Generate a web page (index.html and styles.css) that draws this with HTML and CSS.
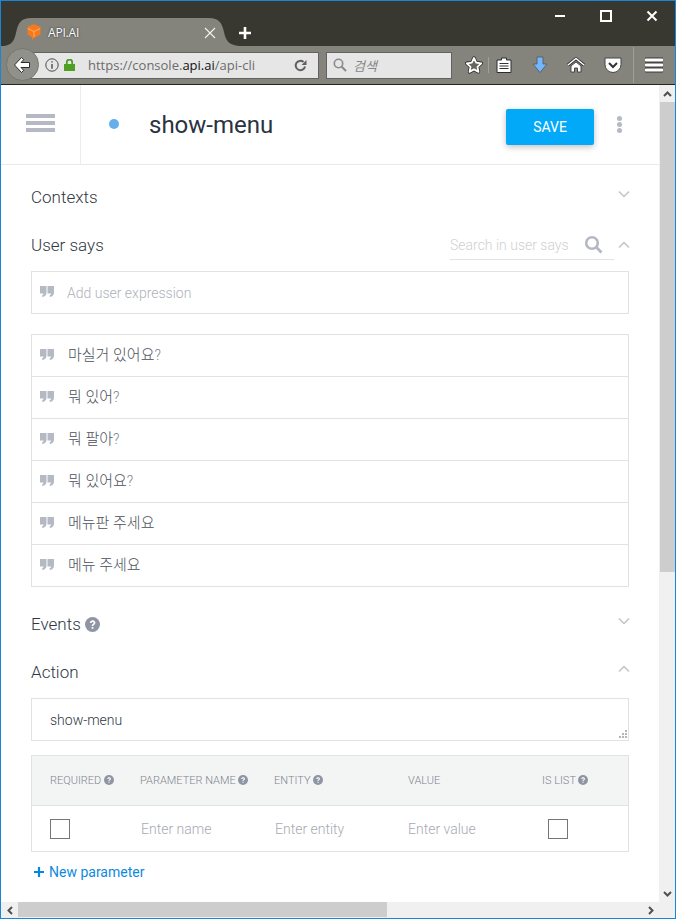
FILE: index.html
```html
<!DOCTYPE html>
<html lang="en">
<head>
<meta charset="utf-8">
<title>API.AI</title>
<link rel="stylesheet" href="styles.css">
</head>
<body>
<svg class="defs" width="0" height="0">
  <defs>
    <symbol id="quote" viewBox="0 0 14 11"><path d="M0 0h6.500v6.500c0 2.400-1.500 3.900-4 4.500L2 9.500C3 9 3.500 8.400 3.500 7.500H0zM7.500 0H14v6.500c0 2.400-1.500 3.900-4 4.500l-.5-1.500c1-.5 1.500-1.100 1.500-2H7.500z"/></symbol>
    <symbol id="help" viewBox="0 0 16 16"><circle cx="8" cy="8" r="8"/><path d="M5.200 6.300C5.300 4.600 6.500 3.500 8.200 3.500c1.700 0 2.900 1 2.900 2.500 0 1.200-.7 1.800-1.500 2.400-.6.400-.8.700-.8 1.300H7.100c0-1.100.4-1.700 1.200-2.300.6-.4.900-.8.900-1.300s-.4-.9-1-.9c-.7 0-1.100.5-1.200 1.100zM7.100 10.600h1.900v1.900H7.100z" fill="#fff"/></symbol>
  </defs>
</svg>
<div class="window">
  <div class="titlebar">
    <div class="tab">
      <svg class="tab-shape" width="240" height="28" viewBox="0 0 240 28"><path d="M3 28C10 27 13 24 15 15 17 5 20 0 30 0H208C218 0 221 5 223 14 225 24 229 27 238 28Z"/></svg>
      <svg class="tab-logo" width="14" height="16" viewBox="0 0 14 16"><path d="M7 0l6.500 3v7.500L7 14l-2 2v-2.400L.5 10.500V3z" fill="#f5791f"/><path d="M.8 4.500L7 7.500l6.200-3M7 7.500V13" stroke="#ffb066" stroke-width="1" fill="none"/></svg>
      <span class="tab-title">API.AI</span>
      <svg class="tab-close" width="12" height="12" viewBox="0 0 12 12"><path d="M1 1l10 10M11 1L1 11" stroke="#f2f2f2" stroke-width="1.100"/></svg>
    </div>
    <svg class="new-tab" width="14" height="14" viewBox="0 0 14 14"><path d="M7 1v12M1 7h12" stroke="#fff" stroke-width="2.600"/></svg>
    <div class="win-controls">
      <svg width="12" height="12" viewBox="0 0 12 12"><path d="M1 6h10" stroke="#fff" stroke-width="2"/></svg>
      <svg width="12" height="12" viewBox="0 0 12 12"><rect x="1" y="1" width="10" height="10" fill="none" stroke="#fff" stroke-width="2"/></svg>
      <svg width="12" height="12" viewBox="0 0 12 12"><path d="M1.500 1.500l9 9M10.500 1.500l-9 9" stroke="#fff" stroke-width="2"/></svg>
    </div>
  </div>
  <div class="toolbar">
    <div class="back">
      <svg width="18" height="18" viewBox="0 0 18 18"><path d="M8.500 1.500L1.500 9l7 7.500 2.200-2.200L8 11.500h8.500v-5H8l2.700-2.800z" fill="#fff" stroke="#2c2c2c" stroke-width="1"/></svg>
    </div>
    <div class="urlbar">
      <svg class="info" width="14" height="14" viewBox="0 0 14 14"><circle cx="7" cy="7" r="6.200" fill="none" stroke="#4a4a4a" stroke-width="1"/><path d="M7 3.200v1.400M7 6v4.800" stroke="#4a4a4a" stroke-width="1.400"/></svg>
      <svg class="lock" width="11" height="12" viewBox="0 0 11 12"><path d="M0 5h11v7H0z" fill="#4f9f25"/><path d="M2.800 5V3.200a2.700 2.700 0 0 1 5.400 0V5" fill="none" stroke="#4f9f25" stroke-width="1.800"/></svg>
      <span class="url"><span class="url-dim">https://console.</span><span class="url-host">api.ai</span><span class="url-dim">/api-cli</span></span>
      <svg class="reload" width="13" height="13" viewBox="0 0 13 13"><path d="M11 7.500A4.700 4.700 0 1 1 9.500 3" fill="none" stroke="#5f5f5f" stroke-width="2"/><path d="M12.500 1v5h-5z" fill="#5f5f5f"/></svg>
    </div>
    <div class="searchbar">
      <svg width="14" height="14" viewBox="0 0 14 14"><circle cx="5.500" cy="5.500" r="4.200" fill="none" stroke="#8a8a8a" stroke-width="1.600"/><path d="M8.700 8.700l4.300 4.300" stroke="#8a8a8a" stroke-width="2"/></svg>
      <span class="search-label">검색</span>
    </div>
    <div class="tools">
      <svg class="tool-star" width="18" height="18" viewBox="0 0 18 18"><path d="M9 2l2.200 4.700 5.100.6-3.800 3.500 1 5.100L9 13.400l-4.500 2.500 1-5.100-3.800-3.500 5.100-.6z" fill="#66665f" stroke="#2c2c2c" stroke-width="3.400" stroke-linejoin="round"/><path d="M9 2l2.200 4.700 5.100.6-3.800 3.500 1 5.100L9 13.400l-4.500 2.500 1-5.100-3.800-3.500 5.100-.6z" fill="#66665f" stroke="#fff" stroke-width="1.800" stroke-linejoin="round"/></svg>
      <span class="tool-sep"></span>
      <svg class="tool-list" width="16" height="16" viewBox="0 0 16 16"><path d="M1 3h4.500V1h5v2H15v12.500H1z" fill="#fff" stroke="#2c2c2c" stroke-width="1" stroke-linejoin="round"/><path d="M3.500 6.500h9M3.500 9h9M3.500 11.500h9" stroke="#333" stroke-width="1.200"/></svg>
      <svg class="tool-down" width="16" height="18" viewBox="0 0 16 18"><path d="M5 1h6v7h4l-7 8.500L1 8h4z" fill="#72b7ff" stroke="#555" stroke-width=".8"/></svg>
      <svg class="tool-home" width="18" height="16" viewBox="0 0 18 16"><path d="M1 8l8-6.500L17 8" fill="none" stroke="#2c2c2c" stroke-width="3"/><path d="M1 8l8-6.500L17 8" fill="none" stroke="#fff" stroke-width="1.500"/><path d="M4 9l5-4 5 4v6h-3.500v-4h-3v4H4z" fill="#fff" stroke="#2c2c2c" stroke-width=".8"/></svg>
      <svg class="tool-pocket" width="18" height="16" viewBox="0 0 18 16"><path d="M1 1h16v6.500a8 8 0 0 1-16 0z" fill="#fff" stroke="#444" stroke-width="1" stroke-linejoin="round"/><path d="M5 6l4 4 4-4" fill="none" stroke="#333" stroke-width="2"/></svg>
      <span class="tool-sep tool-sep-wide"></span>
      <svg class="tool-menu" width="18" height="16" viewBox="0 0 18 16"><path d="M1 1h16a.6.6 0 0 1 0 4H1a.6.6 0 0 1 0-4zM1 6h16a.6.6 0 0 1 0 4H1a.6.6 0 0 1 0-4zM1 11h16a.6.6 0 0 1 0 4H1a.6.6 0 0 1 0-4z" fill="#fff" stroke="#2c2c2c" stroke-width=".9"/></svg>
    </div>
  </div>
  <div class="viewport">
    <div class="page">
      <header class="app-header">
        <div class="nav-cell">
          <div class="burger"><span></span><span></span><span></span></div>
        </div>
        <div class="header-main">
          <span class="status-dot"></span>
          <h1 class="intent-name">show-menu</h1>
          <button class="save-btn">SAVE</button>
          <div class="kebab"><span></span><span></span><span></span></div>
        </div>
      </header>
      <main class="content">
        <section class="section">
          <div class="section-head">
            <span class="section-title">Contexts</span>
            <svg class="chevron chevron-push" width="12" height="8" viewBox="0 0 12 8"><path d="M1 1.500l5 5 5-5" fill="none" stroke="#bfc3cc" stroke-width="1.500"/></svg>
          </div>
        </section>
        <section class="section">
          <div class="section-head">
            <span class="section-title">User says</span>
            <div class="search-field">
              <span class="search-ph">Search in user says</span>
              <svg width="19" height="19" viewBox="0 0 19 19"><circle cx="8" cy="8" r="5.800" fill="none" stroke="#b3b8c4" stroke-width="2.600"/><path d="M12.300 12.300l5.200 5.200" stroke="#b3b8c4" stroke-width="2.800"/></svg>
            </div>
            <svg class="chevron" width="12" height="8" viewBox="0 0 12 8"><path d="M1 6.500l5-5 5 5" fill="none" stroke="#bfc3cc" stroke-width="1.500"/></svg>
          </div>
          <div class="box add-row">
            <svg class="quote"><use href="#quote"/></svg>
            <span class="placeholder">Add user expression</span>
          </div>
          <div class="box phrase-list">
            <div class="phrase"><svg class="quote"><use href="#quote"/></svg><span class="phrase-text">마실거 있어요<span class="qm">?</span></span></div>
            <div class="phrase"><svg class="quote"><use href="#quote"/></svg><span class="phrase-text">뭐 있어<span class="qm">?</span></span></div>
            <div class="phrase"><svg class="quote"><use href="#quote"/></svg><span class="phrase-text">뭐 팔아<span class="qm">?</span></span></div>
            <div class="phrase"><svg class="quote"><use href="#quote"/></svg><span class="phrase-text">뭐 있어요<span class="qm">?</span></span></div>
            <div class="phrase"><svg class="quote"><use href="#quote"/></svg><span class="phrase-text">메뉴판 주세요</span></div>
            <div class="phrase"><svg class="quote"><use href="#quote"/></svg><span class="phrase-text">메뉴 주세요</span></div>
          </div>
        </section>
        <section class="section section-events">
          <div class="section-head">
            <span class="section-title">Events</span>
            <svg class="help-lg"><use href="#help"/></svg>
            <svg class="chevron chevron-push" width="12" height="8" viewBox="0 0 12 8"><path d="M1 1.500l5 5 5-5" fill="none" stroke="#bfc3cc" stroke-width="1.500"/></svg>
          </div>
        </section>
        <section class="section">
          <div class="section-head">
            <span class="section-title">Action</span>
            <svg class="chevron chevron-push" width="12" height="8" viewBox="0 0 12 8"><path d="M1 6.500l5-5 5 5" fill="none" stroke="#bfc3cc" stroke-width="1.500"/></svg>
          </div>
          <div class="box action-box">
            <span>show-menu</span>
            <svg class="grip" width="9" height="9" viewBox="0 0 9 9"><path d="M7 0h2v2H7zM4 3h2v2H4zM7 3h2v2H7zM1 6h2v2H1zM4 6h2v2H4zM7 6h2v2H7z" fill="#b5b5b5"/></svg>
          </div>
          <div class="box params">
            <div class="params-row params-head">
              <div class="th">Required <svg class="help-sm"><use href="#help"/></svg></div>
              <div class="th">Parameter name <svg class="help-sm"><use href="#help"/></svg></div>
              <div class="th">Entity <svg class="help-sm"><use href="#help"/></svg></div>
              <div class="th">Value</div>
              <div class="th">Is list <svg class="help-sm"><use href="#help"/></svg></div>
            </div>
            <div class="params-row params-body">
              <div><span class="checkbox"></span></div>
              <div class="td-ph">Enter name</div>
              <div class="td-ph">Enter entity</div>
              <div class="td-ph td-value">Enter value</div>
              <div><span class="checkbox checkbox-list"></span></div>
            </div>
          </div>
          <a class="new-param"><svg width="10" height="10" viewBox="0 0 10 10"><path d="M5 0v10M0 5h10" stroke="#0288e0" stroke-width="2.200"/></svg>New parameter</a>
        </section>
      </main>
    </div>
    <div class="vscroll">
      <span class="sb-btn"><svg width="9" height="6" viewBox="0 0 9 6"><path d="M1 5l3.500-3.500L8 5" fill="none" stroke="#505050" stroke-width="2"/></svg></span>
      <div class="v-track"><div class="v-thumb"></div></div>
      <span class="sb-btn"><svg width="9" height="6" viewBox="0 0 9 6"><path d="M1 1l3.500 3.500L8 1" fill="none" stroke="#505050" stroke-width="2"/></svg></span>
    </div>
  </div>
  <div class="hscroll">
    <span class="sb-btn sb-btn-h"><svg width="6" height="9" viewBox="0 0 6 9"><path d="M5 1L1.500 4.500 5 8" fill="none" stroke="#505050" stroke-width="2"/></svg></span>
    <div class="h-track"><div class="h-thumb"></div></div>
    <span class="sb-btn sb-btn-h"><svg width="6" height="9" viewBox="0 0 6 9"><path d="M1 1l3.500 3.500L1 8" fill="none" stroke="#505050" stroke-width="2"/></svg></span>
    <span class="sb-corner"></span>
  </div>
</div>
</body>
</html>
```
FILE: styles.css
```css
* { box-sizing: border-box; }
html, body { margin: 0; padding: 0; }
body { width: 676px; height: 919px; overflow: hidden; font-family: Roboto, "Noto Sans CJK KR", sans-serif; }
.defs { position: absolute; }

.window { width: 676px; height: 919px; display: flex; flex-direction: column; border: 1px solid #1a86d8; background: #fff; }

/* title bar */
.titlebar { height: 45px; flex: none; background: #383831; display: flex; align-items: flex-start; }
.tab { position: relative; width: 240px; height: 28px; margin-top: 17px; flex: none; display: flex; align-items: center; padding-left: 26px; }
.tab-shape { position: absolute; left: 0; top: 0; fill: #84847c; }
.tab-logo { position: relative; margin-right: 7px; }
.tab-title { position: relative; font: 12px "Open Sans", sans-serif; color: #fff; text-shadow: 0 0 2px #222; letter-spacing: -.2px; }
.tab-close { position: absolute; left: 203px; top: 9px; }
.new-tab { margin: 25px 0 0 -3px; flex: none; }
.win-controls { margin-left: auto; margin-top: 9px; display: flex; gap: 34px; padding-right: 17px; }

/* toolbar */
.toolbar { height: 39px; flex: none; background: #84847c; border-bottom: 1px solid #25251f; display: flex; align-items: center; position: relative; padding-left: 29px; }
.back { position: absolute; left: 5px; top: 2px; width: 33px; height: 33px; border-radius: 50%; background: #91918c; border: 1px solid #77776f; display: flex; align-items: center; justify-content: center; padding-right: 2px; }
.urlbar { width: 289px; height: 27px; background: #e6e6e6; border: 1px solid #626260; display: flex; align-items: center; padding-left: 14px; }
.info { flex: none; margin-right: 5px; }
.lock { flex: none; }
.url { width: 176px; margin-left: 11px; padding-left: 2px; font: 13px/25px "Open Sans", sans-serif; white-space: nowrap; flex: none; }
.url-dim { color: #6c6c6c; }
.url-host { color: #111; }
.reload { margin-left: 32px; flex: none; }
.searchbar { width: 126px; height: 27px; margin-left: 7px; background: #e6e6e6; border: 1px solid #626260; display: flex; align-items: center; padding-left: 6px; gap: 6px; }
.search-label { font: italic 13px "Noto Sans CJK KR", sans-serif; color: #858585; }
.tools { display: flex; align-items: center; height: 100%; margin-left: 13px; }
.tool-sep { width: 1px; height: 16px; background: #a0a09a; margin-left: 5px; }
.tool-list { margin-left: 7px; }
.tool-down { margin-left: 20px; }
.tool-home { margin-left: 19px; }
.tool-pocket { margin-left: 19px; }
.tool-sep-wide { height: 36px; margin-left: 11px; }
.tool-menu { margin-left: 11px; }

/* viewport */
.viewport { flex: 1; min-height: 0; display: flex; }
.page { flex: 1; min-width: 0; background: #fff; overflow: hidden; }
.vscroll { width: 16px; flex: none; background: #f0f0f0; display: flex; flex-direction: column; }
.sb-btn { height: 17px; flex: none; display: flex; align-items: center; justify-content: center; }
.v-track { flex: 1; }
.v-thumb { width: 15px; height: 470px; margin-left: 1px; background: #cdcdcd; }
.hscroll { height: 16px; flex: none; background: #f0f0f0; display: flex; }
.sb-btn-h { width: 17px; height: 16px; }
.h-track { flex: 1; }
.h-thumb { width: 369px; height: 15px; background: #cdcdcd; }
.sb-corner { width: 16px; flex: none; }

/* app header */
.app-header { height: 80px; display: flex; border-bottom: 1px solid #e9e9e9; }
.nav-cell { width: 80px; flex: none; border-right: 1px solid #ececec; display: flex; align-items: center; justify-content: center; padding-bottom: 3px; }
.burger { width: 29px; display: flex; flex-direction: column; gap: 3px; }
.burger span { height: 4px; background: #b4b9c4; }
.header-main { flex: 1; display: flex; align-items: center; padding-left: 28px; }
.status-dot { width: 10px; height: 10px; border-radius: 50%; background: #66afec; flex: none; margin-bottom: 1px; }
.intent-name { margin: 0 0 0 30px; font-size: 24px; font-weight: 400; color: #2a3342; line-height: 30px; }
.save-btn { margin: 5px 0 0 auto; width: 88px; height: 36px; background: #03a9f9; color: #fff; border: 0; border-radius: 2px; font: 400 14px Roboto, sans-serif; box-shadow: 0 2px 6px rgba(0,0,0,.25); }
.kebab { width: 5px; margin: 0 37px 0 23px; display: flex; flex-direction: column; gap: 1px; padding-bottom: 1px; }
.kebab span { height: 5px; border-radius: 50%; background: #b4b9c4; }

/* content */
.content { padding: 0 30px; }
.section { padding-top: 16px; }
.section-events { padding-top: 21px; }
.section-head { height: 32px; display: flex; align-items: center; }
.section-title { font-size: 17px; font-weight: 300; color: #2f3744; }
.chevron { flex: none; margin-right: -1px; }
.chevron-push { margin-left: auto; margin-top: -7px; }
.search-field { margin-left: auto; width: 164px; height: 30px; display: flex; align-items: center; justify-content: space-between; border-bottom: 1px solid #e2e2e2; padding: 0 11px 0 0; }
.search-ph { font-size: 14px; font-weight: 300; color: #cfcfcf; }
.search-field + .chevron { margin-left: 4px; }
.help-lg { width: 15px; height: 15px; fill: #8f95a3; margin-left: 4px; }
.help-sm { width: 10px; height: 10px; fill: #8f95a3; margin-left: 0; vertical-align: -1px; }

.box { border: 1px solid #e2e2e2; background: #fff; }
.quote { width: 14px; height: 11px; fill: #b4b9c4; flex: none; margin: -3px 13px 0 8px; }
.add-row { height: 43px; margin-top: 10px; display: flex; align-items: center; }
.placeholder { font-size: 14px; font-weight: 300; color: #aeb2ba; }
.phrase-list { margin-top: 20px; }
.phrase { height: 42px; display: flex; align-items: center; border-top: 1px solid #e2e2e2; }
.phrase:first-child { height: 41px; border-top: 0; }
.phrase-text { font-size: 15px; font-weight: 300; color: #4a4f5a; margin-top: -4px; padding-left: 1px; }
.qm { font-size: 14px; color: #7a7f8a; }

.action-box { position: relative; height: 43px; margin-top: 10px; display: flex; align-items: center; padding-left: 18px; font-size: 14px; font-weight: 300; color: #2f3744; }
.grip { position: absolute; right: 1px; bottom: 1px; }

.params { margin-top: 14px; }
.params-row { display: grid; grid-template-columns: 90px 134px 134px 134px 1fr; padding-left: 18px; align-items: center; }
.params-head { height: 50px; background: #f3f5f5; border-bottom: 1px solid #e2e2e2; }
.th { font-size: 11px; font-weight: 300; color: #80848e; text-transform: uppercase; white-space: nowrap; }
.params-body { height: 45px; font-size: 14px; font-weight: 300; }
.td-ph { color: #a6aab2; padding-left: 1px; }
.td-value { padding-left: 0; }
.checkbox { display: block; width: 20px; height: 20px; border: 1px solid #757575; }
.checkbox-list { margin-left: 6px; }
.new-param { display: flex; align-items: center; height: 20px; margin-top: 10px; padding-left: 3px; gap: 5px; font-size: 14px; color: #0d8ae0; }
```
